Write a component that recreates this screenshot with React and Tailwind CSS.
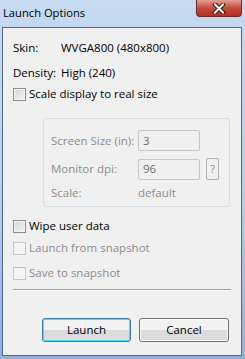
const font = { fontFamily: '"Open Sans", "Segoe UI", sans-serif' };

const Checkbox = ({ label, disabled }) => (
  <div className="flex items-center h-4 pl-[10px]">
    <span
      className={
        disabled
          ? 'w-[13px] h-[13px] border border-[#c6c6c6] bg-[#f4f4f4]'
          : 'w-[13px] h-[13px] border border-[#8e8f8f] bg-gradient-to-br from-[#d4d4d4] to-[#f6f6f6] shadow-[inset_0_0_0_1px_#f4f4f4]'
      }
    />
    <span className={`ml-[3px] ${disabled ? 'text-[#8d8d8d]' : 'text-black'}`}>{label}</span>
  </div>
);

const Field = ({ value }) => (
  <div className="w-[62px] h-[21px] border border-[#c8c8c8] rounded-[2px] bg-[#f0f0f0] flex items-center pl-[4px] text-[#6d6d6d]">
    {value}
  </div>
);

const Button = ({ label, primary }) => (
  <button
    className={`h-[24px] rounded-[3px] border text-black bg-gradient-to-b from-[#f2f2f2] from-50% to-[#dcdcdc] to-50% ${
      primary
        ? 'w-[89px] border-[#3c7fb1] shadow-[inset_0_0_0_1px_#48d8fb]'
        : 'w-[90px] border-[#707070] shadow-[inset_0_0_0_1px_#fafafa]'
    }`}
  >
    {label}
  </button>
);

export default function App() {
  return (
    <div
      className="w-[245px] h-[359px] bg-gradient-to-b from-[#c6daf1] via-[#b7cfec] to-[#8fb1de] flex flex-col text-[11.5px] leading-4"
      style={font}
    >
      {/* Title bar */}
      <div className="h-[27px] flex items-start justify-between">
        <span className="pl-[3px] pt-[5px] text-[11.2px] text-black">Launch Options</span>
        <div className="mr-[3px] w-[46px] h-[17px] rounded-b-[4px] border border-t-0 border-[#6e2b2b] bg-gradient-to-b from-[#e29d95] via-[#c7493d] to-[#b32f24] flex items-center justify-center">
          <svg width="14" height="11" viewBox="0 0 14 11">
            <path d="M3 1.5 L11 9.5 M11 1.5 L3 9.5" stroke="#3a1717" strokeWidth="4" strokeLinecap="square" />
            <path d="M3 1.5 L11 9.5 M11 1.5 L3 9.5" stroke="#ffffff" strokeWidth="2" strokeLinecap="square" />
          </svg>
        </div>
      </div>

      {/* Client area */}
      <div className="ml-[2px] w-[240px] h-[329px] border border-[#56698a] bg-[#f0f0f0] flex flex-col">
        <div className="flex items-center h-4 pl-[10px] mt-[12px]">
          <span className="w-[48px]">Skin:</span>
          <span>WVGA800 (480x800)</span>
        </div>
        <div className="flex items-center h-4 pl-[10px] mt-[9px]">
          <span className="w-[48px]">Density:</span>
          <span>High (240)</span>
        </div>
        <div className="mt-[5px]">
          <Checkbox label="Scale display to real size" />
        </div>

        {/* Group box */}
        <div className="ml-[40px] mt-[16px] w-[187px] h-[89px] border border-[#d5dfe5] rounded-[3px] flex flex-col pl-[7px] pt-[11px] text-[#8d8d8d]">
          <div className="flex items-center">
            <span className="w-[87px]">Screen Size (in):</span>
            <Field value="3" />
          </div>
          <div className="flex items-center mt-[7px]">
            <span className="w-[87px]">Monitor dpi:</span>
            <Field value="96" />
            <div className="ml-[6px] w-[13px] h-[22px] border border-[#adb2b5] rounded-[2px] flex items-center justify-center text-[#8d8d8d] text-[11px]">
              ?
            </div>
          </div>
          <div className="flex items-center h-4 mt-[5px]">
            <span className="w-[87px]">Scale:</span>
            <span>default</span>
          </div>
        </div>

        <div className="mt-[11px]">
          <Checkbox label="Wipe user data" />
        </div>
        <div className="mt-[6px]">
          <Checkbox label="Launch from snapshot" disabled />
        </div>
        <div className="mt-[9px]">
          <Checkbox label="Save to snapshot" disabled />
        </div>

        <div className="ml-[10px] mt-[8px] w-[218px] h-px bg-[#a0a0a0] border-b border-white box-content" />

        <div className="flex mt-[27px] pl-[39px] gap-[8px]">
          <Button label="Launch" primary />
          <Button label="Cancel" />
        </div>
      </div>
    </div>
  );
}
